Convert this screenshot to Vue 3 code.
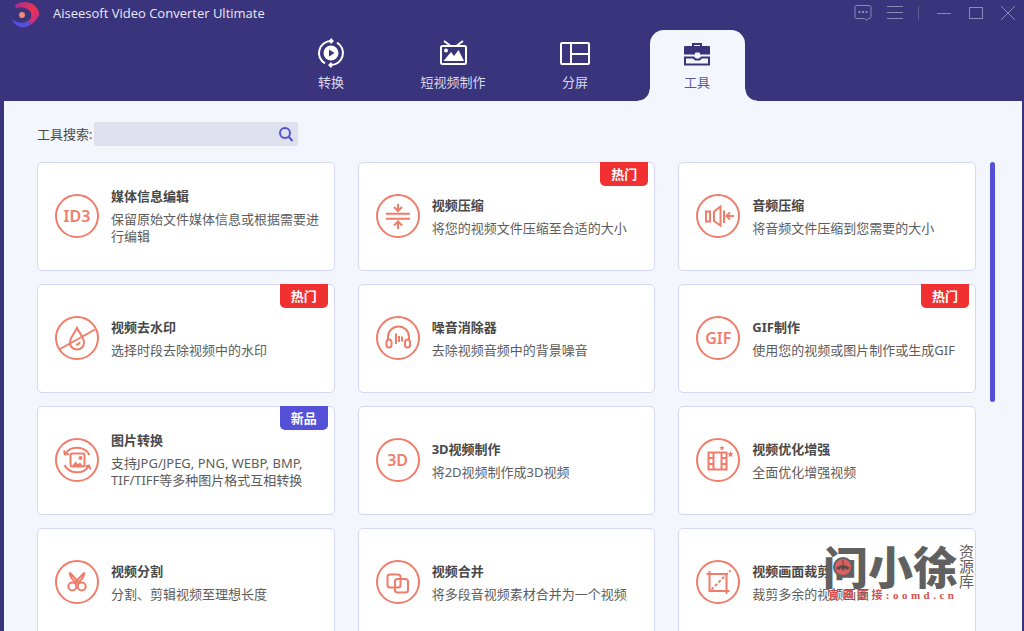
<script setup>
import { ref } from 'vue'

const keyword = ref('')
const active = ref('tools')

const tabs = [
  { id: 'convert', label: '转换' },
  { id: 'mv', label: '短视频制作' },
  { id: 'split', label: '分屏' },
  { id: 'tools', label: '工具' }
]

const tools = [
  { icon: 'text', mark: 'ID3', title: '媒体信息编辑', desc: '保留原始文件媒体信息或根据需要进行编辑' },
  { icon: 'compress', title: '视频压缩', desc: '将您的视频文件压缩至合适的大小', badge: '热门' },
  { icon: 'audio', title: '音频压缩', desc: '将音频文件压缩到您需要的大小' },
  { icon: 'water', title: '视频去水印', desc: '选择时段去除视频中的水印', badge: '热门' },
  { icon: 'noise', title: '噪音消除器', desc: '去除视频音频中的背景噪音' },
  { icon: 'text', mark: 'GIF', title: 'GIF制作', desc: '使用您的视频或图片制作或生成GIF', badge: '热门' },
  { icon: 'image', title: '图片转换', desc: '支持JPG/JPEG, PNG, WEBP, BMP, TIF/TIFF等多种图片格式互相转换', badge: '新品', fresh: true },
  { icon: 'text', mark: '3D', title: '3D视频制作', desc: '将2D视频制作成3D视频' },
  { icon: 'enhance', title: '视频优化增强', desc: '全面优化增强视频' },
  { icon: 'cut', title: '视频分割', desc: '分割、剪辑视频至理想长度' },
  { icon: 'merge', title: '视频合并', desc: '将多段音视频素材合并为一个视频' },
  { icon: 'crop', title: '视频画面裁剪', desc: '裁剪多余的视频画面' }
]

const siteChars = [...'官网链接:oomd.cn']
</script>

<template>
  <div class="window">
    <header class="header">
      <div class="titlebar">
        <div class="brand">
          <svg class="logo" width="30" height="28" viewBox="0 0 30 28" aria-hidden="true">
            <defs>
              <linearGradient id="crescent" x1="0" y1="0" x2="1" y2="1">
                <stop offset="0" stop-color="#a52c9c" />
                <stop offset="0.5" stop-color="#e8344e" />
                <stop offset="1" stop-color="#b02ca4" />
              </linearGradient>
            </defs>
            <path d="M4 4C9 0 18 0 23 4C28 9 30 13 27 16C23 22 18 26 12 26L14 21C20 20 22 15 19 10C16 7 10 5 5 7Z" fill="url(#crescent)" />
            <path d="M1 18C5 22 12 23 19 20L20 23C14 29 4 27 1 18Z" fill="#5550dc" />
            <circle cx="11" cy="14" r="6" fill="#39347c" />
            <circle cx="11" cy="14" r="3" fill="#f58a72" />
          </svg>
          <span>Aiseesoft Video Converter Ultimate</span>
        </div>
        <div class="controls">
          <button type="button" aria-label="反馈">
            <svg width="18" height="18" viewBox="0 0 18 18"><path d="M3 1.500H15Q17 1.500 17 3.500V12.500Q17 14.500 15 14.500H14L12.500 16.500L10.500 14.500H3Q1 14.500 1 12.500V3.500Q1 1.500 3 1.500Z" /><path d="M4.500 8h2M8 8h2M11.500 8h2" stroke-width="2" /></svg>
          </button>
          <button type="button" aria-label="菜单">
            <svg width="18" height="18" viewBox="0 0 18 18"><path d="M1 2.500H17M1 8.500H17M1 14.500H17" /></svg>
          </button>
          <span class="divider"></span>
          <button type="button" aria-label="最小化">
            <svg width="18" height="18" viewBox="0 0 18 18"><path d="M2 9.500H16" /></svg>
          </button>
          <button type="button" aria-label="最大化">
            <svg width="18" height="18" viewBox="0 0 18 18"><rect x="2.500" y="3.500" width="13" height="11" /></svg>
          </button>
          <button type="button" aria-label="关闭">
            <svg width="18" height="18" viewBox="0 0 18 18"><path d="M2 2L16 16M16 2L2 16" /></svg>
          </button>
        </div>
      </div>

      <nav class="tabs">
        <button v-for="tab in tabs" :key="tab.id" type="button" class="tab" :class="{ active: active === tab.id }" @click="active = tab.id">
          <svg v-if="tab.id === 'convert'" width="30" height="30" viewBox="0 0 30 30" fill="none" stroke="currentColor" stroke-width="2">
            <path d="M9 25.400A12 12 0 0 1 15 3" />
            <path d="M21 4.600A12 12 0 0 1 15 27" />
            <path d="M15 0L18 3L15 6L13 3ZM15 24L17 27L15 30L12 27Z" fill="currentColor" stroke="none" />
            <circle cx="15" cy="15" r="7.500" fill="currentColor" stroke="none" />
            <path d="M13 11.500L18.500 15L13 18.500Z" fill="#39347c" stroke="none" />
          </svg>
          <svg v-else-if="tab.id === 'mv'" width="30" height="30" viewBox="0 0 30 30" fill="none" stroke="currentColor" stroke-width="2">
            <rect x="3" y="8" width="25" height="18" rx="1.500" />
            <path d="M6 3L12 7.500M25 3L19 7.500" />
            <circle cx="8" cy="12.500" r="2" fill="currentColor" stroke="none" />
            <path d="M5.500 23L13 14L16 18L20.500 12L26 23Z" fill="currentColor" stroke="none" />
          </svg>
          <svg v-else-if="tab.id === 'split'" width="30" height="30" viewBox="0 0 30 30" fill="none" stroke="currentColor" stroke-width="2">
            <rect x="1" y="5" width="28" height="21" rx="1" />
            <path d="M11 5V26M11 16H29" />
          </svg>
          <svg v-else width="30" height="30" viewBox="0 0 30 30" fill="currentColor">
            <path d="M11 9V6H19V9" fill="none" stroke="currentColor" stroke-width="2" />
            <path d="M3 8H27Q28 8 28 9V16.500H18V15.500Q18 14.500 17 14.500H14Q13 14.500 13 15.500V16.500H2V9Q2 8 3 8Z" />
            <path d="M3 19.500H11.500L13.500 21.500H17.500L19.500 19.500H27V26.500H3Z" fill="none" stroke="currentColor" stroke-width="2" />
          </svg>
          <span>{{ tab.label }}</span>
        </button>
      </nav>
    </header>

    <main class="content">
      <form class="search" @submit.prevent>
        <label for="tool-search">工具搜索:</label>
        <div class="field">
          <input id="tool-search" v-model="keyword" type="text" />
          <button type="submit" aria-label="搜索">
            <svg width="16" height="16" viewBox="0 0 16 16" fill="none" stroke="#5450d4" stroke-width="2"><circle cx="7" cy="7" r="5" /><path d="M10.500 10.500L14.500 15" /></svg>
          </button>
        </div>
      </form>

      <div class="scroller">
        <div class="grid">
          <button v-for="tool in tools" :key="tool.title" type="button" class="card">
            <span v-if="tool.icon === 'text'" class="mark">{{ tool.mark }}</span>
            <svg v-else class="icon" width="44" height="44" viewBox="0 0 44 44" aria-hidden="true">
              <circle cx="22" cy="22" r="21" />
              <template v-if="tool.icon === 'compress'">
                <path d="M10 19.700H34M10 24.700H34M22 10V17M18 13L22 17L26 13M22 35V28M18 31.500L22 27.500L26 31.500" />
              </template>
              <template v-else-if="tool.icon === 'audio'">
                <rect x="10" y="17.500" width="4" height="10" />
                <path d="M18 17.500L24.500 12.500V31.500L18 27Z M28 16.500V29M38 22H31M34 18.500L30.500 22L34 25.500" />
              </template>
              <template v-else-if="tool.icon === 'water'">
                <path d="M5 33L40 13.500M22 12C25 18 29 22 29 26.500A7 7 0 0 1 15 26.500C15 22 19 18 22 12ZM21 29Q24 28.500 25 26" />
              </template>
              <template v-else-if="tool.icon === 'noise'">
                <path d="M12 24V21A10.500 10.500 0 0 1 33 21V24M20 17.500V28M23 20V26M26 20.500V25.500" />
                <rect x="10.500" y="23.500" width="5" height="8" rx="2.500" />
                <rect x="29" y="23.500" width="5" height="8" rx="2.500" />
              </template>
              <template v-else-if="tool.icon === 'image'">
                <rect x="15.500" y="15.500" width="14" height="13" rx="2" />
                <path d="M34.500 17C30 8 16 7 10.500 15.500M9 12.500L10 16.500L14 16M9.500 27C14 36 28 37 33.500 28.500M30.500 28.500L34 27.500L35.500 31.500" />
                <path d="M17 28L20.500 23.500L23 26L25 24.500L28 28Z" class="solid" />
                <circle cx="25.500" cy="20" r="2" class="solid" />
              </template>
              <template v-else-if="tool.icon === 'enhance'">
                <path d="M12.500 14.500H30.500V31.500H12.500ZM17.500 14.500V31.500M25.500 14.500V31.500M12.500 20H17.500M12.500 26H17.500M25.500 20H30.500M25.500 26H30.500" />
                <path d="M26 7.500L26.700 9L28.500 9.300L27.200 10.500L27.500 12.200L26 11.400L24.500 12.200L24.800 10.500L23.500 9.300L25.300 9Z M34.500 13L35.400 15L37.500 15.300L36 16.800L36.300 19L34.500 18L32.700 19L33 16.800L31.500 15.300L33.600 15Z" class="solid" />
              </template>
              <template v-else-if="tool.icon === 'cut'">
                <path d="M14.500 12.500L24.500 23M29.500 12.500L19.500 23M14.500 12.500C15 17 17 20 22 23.500M29.500 12.500C29 17 27 20 22 23.500" />
                <circle cx="17.300" cy="26.500" r="4" />
                <circle cx="26.700" cy="26.500" r="4" />
              </template>
              <template v-else-if="tool.icon === 'merge'">
                <rect x="11.500" y="14.500" width="13" height="13" rx="2.500" />
                <rect x="19" y="19" width="13" height="13.500" rx="2.500" />
              </template>
              <template v-else>
                <path d="M10.500 14H30.500V34M13.500 11V31H33.500" />
                <path d="M15.500 29.500L34.500 10.500" stroke-dasharray="3 2" />
              </template>
            </svg>
            <span class="info">
              <strong>{{ tool.title }}</strong>
              <span class="desc">{{ tool.desc }}</span>
            </span>
            <span v-if="tool.badge" class="badge" :class="{ fresh: tool.fresh }">{{ tool.badge }}</span>
          </button>
        </div>
        <div class="thumb"></div>
      </div>
    </main>

    <aside class="stamp">
      <div class="stamp-main">
        <div class="stamp-name">
          问小徐
          <svg class="seal" width="20" height="20" viewBox="0 0 20 20" aria-hidden="true">
            <circle cx="10" cy="10" r="10" fill="#606060" />
            <circle cx="10" cy="10" r="8" fill="#d9605e" />
            <path d="M3 11Q10 5 17 11L14 13L12 11L10 14L8 11L6 13Z" fill="#5a4a4c" />
            <path d="M10 3V8" stroke="#5a4a4c" stroke-width="1" />
          </svg>
        </div>
        <div class="stamp-site"><span v-for="(c, i) in siteChars" :key="i">{{ c }}</span></div>
      </div>
      <div class="stamp-side">资源库</div>
    </aside>
  </div>
</template>

<style>
body {
  margin: 0;
}
</style>

<style scoped>
.window {
  position: relative;
  display: flex;
  flex-direction: column;
  height: 100vh;
  overflow: hidden;
  background: #39347c;
  color: #484848;
  font: 13px/17px "Noto Sans", "Noto Sans CJK SC", sans-serif;
}
button {
  border: 0;
  padding: 0;
  background: none;
  color: inherit;
  font: inherit;
  cursor: pointer;
}
svg {
  display: block;
  flex: none;
}
.titlebar {
  display: flex;
  justify-content: space-between;
  height: 30px;
  padding: 0 7px 0 11px;
}
.brand {
  display: flex;
  align-items: center;
  gap: 12px;
  color: #e9e8f6;
  font-family: "Open Sans", "Noto Sans", sans-serif;
  font-size: 13px;
}
.brand span {
  padding-bottom: 3px;
}
.controls {
  display: flex;
  align-items: center;
  gap: 14px;
  padding-bottom: 4px;
}
.controls svg {
  fill: none;
  stroke: #8d89b8;
  stroke-width: 1;
}
.divider {
  width: 1px;
  height: 14px;
  margin-right: 2px;
  background: #5f5b98;
}
.tabs {
  display: flex;
  justify-content: center;
  gap: 27px;
  height: 71px;
  padding-left: 4px;
}
.tab {
  position: relative;
  display: flex;
  flex-direction: column;
  align-items: center;
  gap: 5px;
  width: 95px;
  padding-top: 8px;
  color: #fff;
  line-height: 18px;
}
.tab span {
  color: #d9d8ec;
}
.tab.active {
  border-radius: 14px 14px 0 0;
  background: #f4f6fe;
  color: #39347c;
}
.tab.active span {
  color: #5d5994;
}
.tab.active::before,
.tab.active::after {
  content: "";
  position: absolute;
  bottom: 0;
  width: 12px;
  height: 12px;
}
.tab.active::before {
  right: 100%;
  background: radial-gradient(circle at 0 0, transparent 11px, #f4f6fe 12px);
}
.tab.active::after {
  left: 100%;
  background: radial-gradient(circle at 100% 0, transparent 11px, #f4f6fe 12px);
}
.content {
  flex: 1;
  min-height: 0;
  margin: 0 2px 0 4px;
  padding: 21px 27px 0 33px;
  background: #f4f6fe;
}
.search {
  display: flex;
  align-items: center;
  gap: 2px;
  margin-bottom: 16px;
}
.field {
  display: flex;
  align-items: center;
  width: 204px;
  height: 24px;
  border-radius: 2px;
  background: #dfe0ee;
}
.field input {
  flex: 1;
  min-width: 0;
  height: 24px;
  box-sizing: border-box;
  border: 0;
  padding: 0 8px;
  outline: 0;
  background: none;
  font: inherit;
}
.field button {
  padding-right: 4px;
}
.scroller {
  display: flex;
  align-items: flex-start;
  gap: 14px;
}
.grid {
  flex: 1;
  display: grid;
  grid-template-columns: repeat(3, 1fr);
  gap: 13px 23px;
}
.thumb {
  width: 5px;
  height: 240px;
  border-radius: 3px;
  background: #5450d8;
}
.card {
  position: relative;
  display: flex;
  align-items: center;
  gap: 12px;
  min-height: 109px;
  box-sizing: border-box;
  border: 1px solid #d5d7f5;
  border-radius: 5px;
  padding: 0 8px 2px 17px;
  background: #fff;
  text-align: left;
}
.icon {
  fill: none;
  stroke: #f07c6a;
  stroke-width: 2;
}
.icon .solid {
  fill: #f07c6a;
  stroke: none;
}
.mark {
  display: flex;
  flex: none;
  align-items: center;
  justify-content: center;
  width: 44px;
  height: 44px;
  box-sizing: border-box;
  border: 2px solid #f07c6a;
  border-radius: 50%;
  color: #f07c6a;
  font: 600 16px/20px "Noto Sans", sans-serif;
}
.info {
  display: flex;
  flex-direction: column;
  gap: 5px;
}
.info strong {
  line-height: 20px;
}
.desc {
  color: #5c5c5c;
}
.badge {
  position: absolute;
  top: -1px;
  right: 6px;
  width: 48px;
  border-radius: 0 0 5px 5px;
  background: #f13131;
  color: #fff;
  font-weight: 700;
  line-height: 24px;
  text-align: center;
}
.badge.fresh {
  background: #5450d8;
}
.stamp {
  position: absolute;
  right: 50px;
  bottom: 30px;
  display: flex;
  gap: 1px;
  color: #606060;
}
.stamp-name {
  position: relative;
  font: 900 45px/46px "Noto Sans CJK SC", sans-serif;
}
.seal {
  position: absolute;
  top: 14px;
  left: 10px;
}
.stamp-site {
  display: flex;
  justify-content: space-between;
  padding: 0 4px 0 5px;
  color: #d9504c;
  font: 700 11px/12px "Liberation Serif", "Noto Sans CJK SC", serif;
}
.stamp-side {
  width: 15px;
  font: 15px/15px "Noto Sans CJK SC", serif;
}
</style>
